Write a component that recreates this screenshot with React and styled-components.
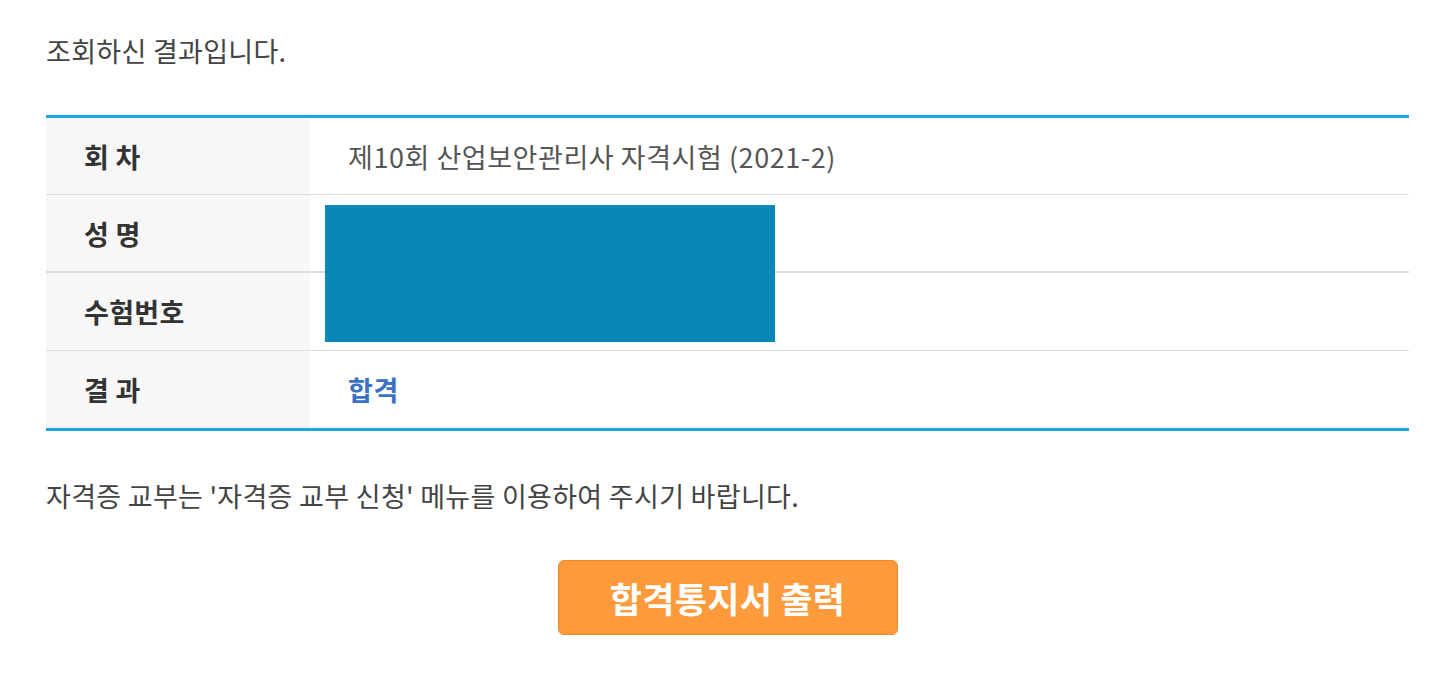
import React from "react";
import styled, { createGlobalStyle } from "styled-components";

const Global = createGlobalStyle`
  html, body { margin: 0; padding: 0; background: #ffffff; }
  body { font-family: "Noto Sans CJK KR", "Noto Sans", sans-serif; }
`;

const Page = styled.div`
  padding: 28px 31px 0 46px;
  width: 1363px;
`;

const Intro = styled.p`
  margin: 0;
  height: 46px;
  line-height: 46px;
  font-size: 27px;
  color: #444;
  letter-spacing: 0.3px;
`;

const Table = styled.div`
  margin-top: 41px;
  border-top: 3px solid #1fa5e2;
  border-bottom: 3px solid #1fa5e2;
  position: relative;
`;

const Row = styled.div`
  display: grid;
  grid-template-columns: 264px 1fr;
  height: ${(p) => p.h}px;
  border-top: ${(p) => (p.first ? "none" : `${p.bw || 1}px solid #dcdcdc`)};
`;

const Label = styled.div`
  background: #f7f7f7;
  display: flex;
  align-items: center;
  padding-left: 38px;
  font-size: 27px;
  font-weight: 700;
  color: #333;
  letter-spacing: 0.3px;
  white-space: pre;
`;

const Value = styled.div`
  display: flex;
  align-items: center;
  padding-left: 38px;
  font-size: 27px;
  color: ${(p) => (p.accent ? "#3a72c6" : "#555")};
  font-weight: ${(p) => (p.accent ? 700 : 400)};
  letter-spacing: 0.55px;
`;

const Redact = styled.div`
  position: absolute;
  left: 279px;
  top: 87px;
  width: 450px;
  height: 137px;
  background: #0888b6;
`;

const Notice = styled.p`
  margin: 45px 0 0;
  line-height: 40px;
  font-size: 27px;
  color: #444;
  letter-spacing: 0.3px;
`;

const ButtonRow = styled.div`
  display: flex;
  justify-content: center;
  margin-top: 44px;
`;

const PrintButton = styled.button`
  width: 340px;
  height: 75px;
  background: #fd9a3b;
  border: 1px solid #ef8a2c;
  border-radius: 6px;
  color: #fff;
  font-family: "Noto Sans CJK KR", sans-serif;
  font-size: 35px;
  font-weight: 700;
  letter-spacing: 0.3px;
  cursor: pointer;
`;

export default function App() {
  return (
    <>
      <Global />
      <Page>
        <Intro>조회하신 결과입니다.</Intro>
        <Table>
          <Row first h={76}>
            <Label>회 차</Label>
            <Value>제10회 산업보안관리사 자격시험 (2021-2)</Value>
          </Row>
          <Row h={76}>
            <Label>성 명</Label>
            <Value />
          </Row>
          <Row h={77} bw={2}>
            <Label>수험번호</Label>
            <Value />
          </Row>
          <Row h={77}>
            <Label>결 과</Label>
            <Value accent>합격</Value>
          </Row>
          <Redact />
        </Table>
        <Notice>자격증 교부는 '자격증 교부 신청' 메뉴를 이용하여 주시기 바랍니다.</Notice>
        <ButtonRow>
          <PrintButton>합격통지서 출력</PrintButton>
        </ButtonRow>
      </Page>
    </>
  );
}
